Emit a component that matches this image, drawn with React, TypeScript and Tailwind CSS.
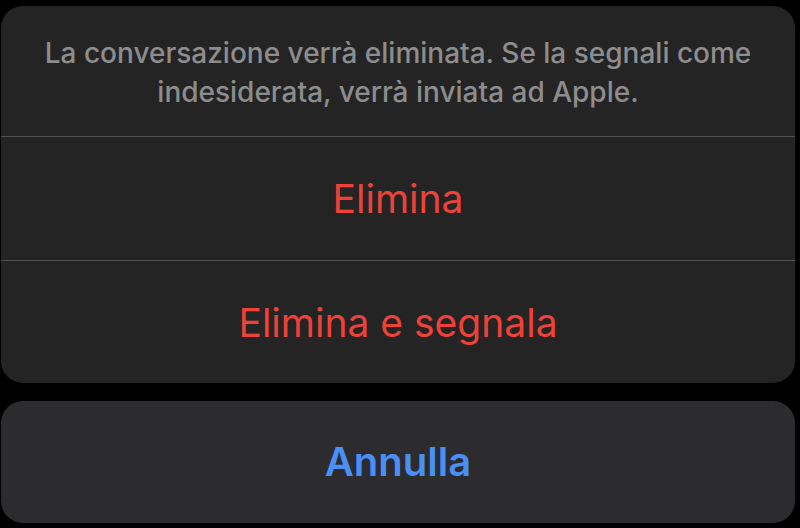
export default function App() {
  return (
    <div className="w-[800px] h-[528px] bg-black flex flex-col pt-[6px] pl-[1px] overflow-hidden" style={{ fontFamily: 'Inter, "Noto Sans", sans-serif' }}>
      {/* Action sheet */}
      <div className="w-[794px] h-[377px] bg-[#242424] rounded-[22px] flex flex-col overflow-hidden">
        <div className="h-[131px] flex items-center justify-center px-2 border-b border-[#505050]">
          <p className="text-center text-[28px] leading-[39px] font-medium text-[#8d8d8d] pt-[4px]">
            La conversazione verrà eliminata. Se la segnali come
            <br />
            indesiderata, verrà inviata ad Apple.
          </p>
        </div>
        <button className="h-[124px] flex items-center justify-center border-b border-[#505050] text-[39px] text-[#ee4239] pt-[2px]">
          Elimina
        </button>
        <button className="flex-1 flex items-center justify-center text-[39px] text-[#ee4239] pt-[2px]">
          Elimina e segnala
        </button>
      </div>
      {/* Cancel */}
      <button className="mt-[18px] w-[794px] h-[122px] bg-[#2c2c2e] rounded-[22px] flex items-center justify-center text-[40px] font-semibold text-[#4a8ff5]">
        Annulla
      </button>
    </div>
  );
}
